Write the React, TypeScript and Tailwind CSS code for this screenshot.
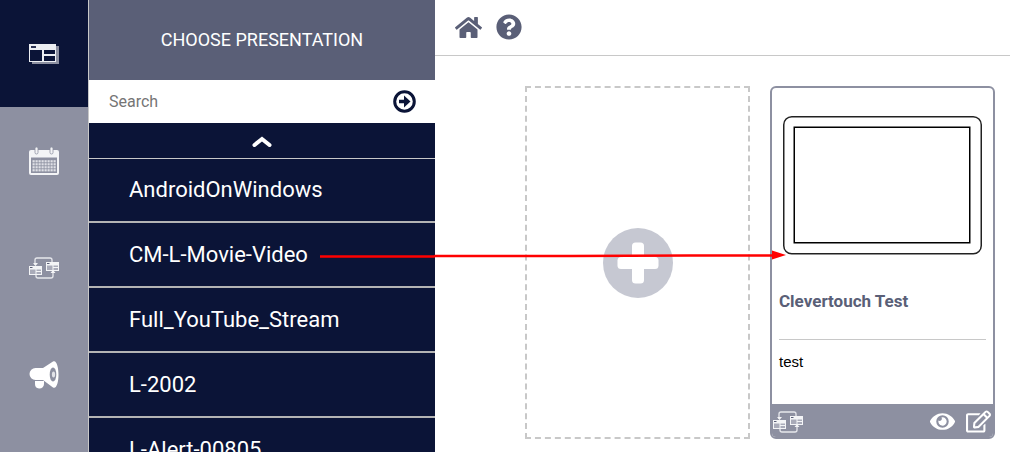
// App.tsx
import React from 'react';
import { FaHome, FaQuestionCircle, FaRegEdit, FaEye } from 'react-icons/fa';

const items = ['AndroidOnWindows', 'CM-L-Movie-Video', 'Full_YouTube_Stream', 'L-2002', 'L-Alert-00805'];

const LayoutIcon = () => (
  <svg width="30" height="20" viewBox="0 0 30 20">
    <rect x="3" y="2" width="27" height="18" fill="#8d90a1" />
    <rect x="0" y="0" width="27" height="18" fill="#eceef2" />
    <rect x="2" y="2" width="5" height="2" fill="#2a3152" />
    <rect x="1" y="6" width="12" height="11" fill="#0b1437" />
    <rect x="15" y="6" width="11" height="4" fill="#0b1437" />
    <rect x="15" y="12" width="11" height="5" fill="#0b1437" />
  </svg>
);

const CalendarIcon = () => {
  const cells = [];
  for (let r = 0; r < 4; r++) {
    for (let c = 0; c < 8; c++) {
      cells.push(<rect key={`${r}-${c}`} x={3.5 + c * 3} y={13.2 + r * 3} width="2.2" height="2.2" fill="#dfe0e6" />);
    }
  }
  return (
    <svg width="30" height="28" viewBox="0 0 30 28">
      <path d="M2 3h26a2 2 0 0 1 2 2v21a2 2 0 0 1-2 2H2a2 2 0 0 1-2-2V5a2 2 0 0 1 2-2z" fill="#f3f4f6" />
      <rect x="2" y="10.500" width="26" height="15.500" fill="#8d90a1" />
      {cells}
      <rect x="6" y="0" width="3" height="7" rx="1.500" fill="#f3f4f6" stroke="#8d90a1" strokeWidth="0.8" />
      <rect x="21" y="0" width="3" height="7" rx="1.500" fill="#f3f4f6" stroke="#8d90a1" strokeWidth="0.8" />
    </svg>
  );
};

const SwapIcon = () => (
  <svg width="30" height="22" viewBox="0 0 30 22" fill="none">
    <path d="M6 8V3a2 2 0 0 1 2-2h13a2 2 0 0 1 2 2v2" stroke="#e6e7ec" strokeWidth="1.300" />
    <path d="M24 14v5a2 2 0 0 1-2 2H9a2 2 0 0 1-2-2v-2" stroke="#e6e7ec" strokeWidth="1.300" />
    <path d="M4 6h5l-2.500 3zM21.500 16h5L24 13z" fill="#f3f4f6" />
    <rect x="0" y="9" width="13" height="9" fill="#f3f4f6" />
    <rect x="1" y="12.500" width="5.500" height="4.500" fill="#a9abb9" />
    <rect x="7.500" y="12.500" width="4.500" height="1.500" fill="#a9abb9" />
    <rect x="7.500" y="15" width="4.500" height="2" fill="#a9abb9" />
    <rect x="1" y="10" width="2.500" height="1" fill="#5a5f77" />
    <rect x="17" y="5" width="13" height="9" fill="#f3f4f6" />
    <rect x="18" y="8.500" width="5.500" height="4.500" fill="#a9abb9" />
    <rect x="24.500" y="8.500" width="4.500" height="1.500" fill="#a9abb9" />
    <rect x="24.500" y="11" width="4.500" height="2" fill="#a9abb9" />
    <rect x="18" y="6" width="2.500" height="1" fill="#5a5f77" />
  </svg>
);

const MegaphoneIcon = () => (
  <svg width="30" height="29" viewBox="0 0 30 29">
    <path d="M6.500 8H14L24 1.500C27.500 -0.500 29.500 7 29.500 14.500S27.500 29.500 24 27.500L14 20H6.500a6 6 0 0 1 0-12z" fill="#ffffff" />
    <path d="M6 21h9v3a4.500 4.500 0 0 1-4.500 4.500h-.5a4.500 4.500 0 0 1-4-4.500z" fill="#ffffff" />
    <ellipse cx="24" cy="14.500" rx="3.300" ry="7" fill="#8d90a1" />
    <ellipse cx="24.500" cy="14.500" rx="1.600" ry="3" fill="#e2e3e8" />
  </svg>
);

export default function App() {
  return (
    <div className="relative flex h-[452px] w-[1010px] overflow-hidden bg-white font-['Roboto',sans-serif]">
      {/* Left rail */}
      <div className="flex w-[88px] shrink-0 flex-col bg-[#8d90a1]">
        <div className="flex h-[107px] items-center justify-center bg-[#0b1437]"><LayoutIcon /></div>
        <div className="flex h-[107px] items-center justify-center"><CalendarIcon /></div>
        <div className="flex h-[107px] items-center justify-center"><SwapIcon /></div>
        <div className="flex h-[107px] items-center justify-center"><MegaphoneIcon /></div>
      </div>

      {/* Presentation list */}
      <div className="flex w-[347px] shrink-0 flex-col border-l border-[#c8c8c8] bg-[#0b1437]">
        <div className="flex h-[80px] shrink-0 items-center justify-center bg-[#5a5f77] text-lg text-white">CHOOSE PRESENTATION</div>
        <div className="flex h-[43px] shrink-0 items-center justify-between bg-white pl-5 pr-[19px]">
          <span className="text-base text-[#757575]">Search</span>
          <svg width="23" height="23" viewBox="0 0 23 23" fill="none">
            <circle cx="11.500" cy="11.500" r="9.800" stroke="#0b1437" strokeWidth="3" />
            <path d="M6 11.500H12" stroke="#0b1437" strokeWidth="3.500" />
            <path d="M11 5.500L17.500 11.500L11 17.500z" fill="#0b1437" />
          </svg>
        </div>
        <div className="flex h-[36px] shrink-0 items-center justify-center border-b border-[#c8c8c8] pt-[3px]">
          <svg width="20" height="12" viewBox="0 0 20 12" fill="none">
            <path d="M2.500 9L10 3L17.500 9" stroke="#ffffff" strokeWidth="4" strokeLinecap="round" />
          </svg>
        </div>
        <div className="flex flex-col">
          {items.map((name) => (
            <div key={name} className="flex h-[65px] shrink-0 items-center border-b-2 border-[#b4b4b4] pl-10 text-[22px] text-white first:h-[64px] first:pb-[2px]">
              {name}
            </div>
          ))}
        </div>
      </div>

      {/* Main area */}
      <div className="flex min-w-0 flex-1 flex-col">
        <div className="flex h-[56px] shrink-0 items-center gap-[14px] border-b border-[#c8c8c8] pb-[1px] pl-5">
          <FaHome className="text-[27px] text-[#5a5f77]" />
          <FaQuestionCircle className="text-[26px] text-[#5a5f77]" />
        </div>
        <div className="flex gap-5 pl-[90px] pt-[30px]">
          <div className="flex h-[353px] w-[225px] items-center justify-center border-2 border-dashed border-[#c8c8c8]">
            <div className="flex h-[70px] w-[70px] items-center justify-center rounded-full bg-[#c6c8d2]">
              <svg width="42" height="42" viewBox="0 0 42 42">
                <rect x="15" y="0.500" width="12" height="41" rx="3.500" fill="#ffffff" />
                <rect x="0.500" y="15" width="41" height="12" rx="3.500" fill="#ffffff" />
              </svg>
            </div>
          </div>
          <div className="flex h-[353px] w-[225px] flex-col overflow-hidden rounded-md border-2 border-[#8d90a1]">
            <div className="flex h-[197px] shrink-0 items-start px-[11px] pt-[28px]">
              <svg width="199" height="139" viewBox="0 0 199 139" fill="none">
                <rect x="0.750" y="0.750" width="197.500" height="137" rx="8" stroke="#222222" strokeWidth="1.500" />
                <rect x="11.250" y="11.250" width="175.500" height="115.500" stroke="#000000" strokeWidth="1.500" />
              </svg>
            </div>
            <div className="mx-[7px] h-[55px] shrink-0 border-b border-[#c8c8c8] pt-[4px] text-[17px] font-bold leading-6 text-[#5a5f77]">
              Clevertouch Test
            </div>
            <div className="flex-1 px-[7px] pt-[11px] font-['Liberation_Sans',sans-serif] text-[15px] text-black">test</div>
            <div className="flex h-[33px] shrink-0 items-center justify-between bg-[#8d90a1] pl-[1px] pr-[2px] pt-[2px]">
              <SwapIcon />
              <div className="flex items-center gap-[11px]">
                <FaEye className="text-[25px] text-white" />
                <FaRegEdit className="text-[25px] text-white" />
              </div>
            </div>
          </div>
        </div>
      </div>

      {/* Drag arrow overlay */}
      <svg className="absolute left-0 top-0" width="1010" height="452" fill="none">
        <path d="M320 256.500H434L435 256H570L690 255.500H775" stroke="#ff0000" strokeWidth="2.500" />
        <path d="M772 250.500L786 255L772 259.500z" fill="#ff0000" />
      </svg>
    </div>
  );
}
